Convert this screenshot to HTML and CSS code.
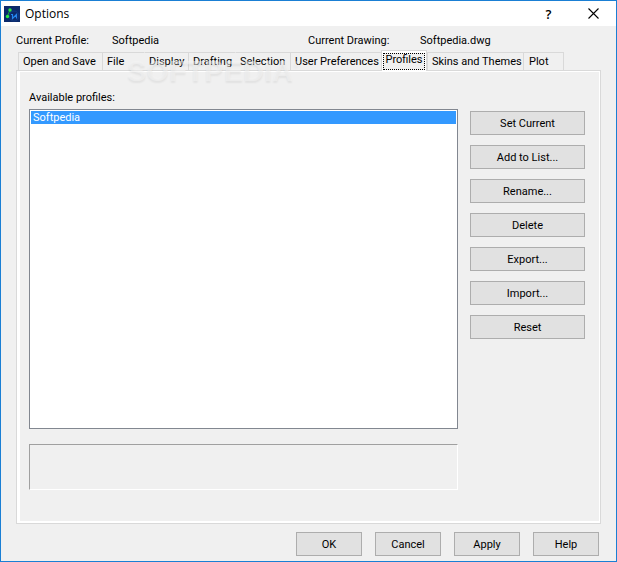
FILE: index.html
```html
<!DOCTYPE html>
<html lang="en">
<head>
<meta charset="utf-8">
<title>Options</title>
<link rel="stylesheet" href="styles.css">
</head>
<body>
<div class="window">
  <header class="titlebar">
    <svg class="app-icon" viewBox="0 0 16 16" aria-hidden="true">
      <rect width="16" height="16" fill="#0b2a6b"/>
      <circle cx="10" cy="10" r="5" fill="none" stroke="#123a82"/>
      <path d="M3.500 10 5.500 5" stroke="#18a33f" stroke-width="1"/>
      <circle cx="6" cy="4" r="1.700" fill="#2bea43"/>
      <circle cx="3.500" cy="10.500" r="1.700" fill="#2bea43"/>
      <path d="M7 8.500h1.500v4l4-4v4" fill="none" stroke="#2586ee" stroke-width="1.200"/>
    </svg>
    <h1 class="title">Options</h1>
    <button class="caption-button" type="button" aria-label="Help">?</button>
    <button class="caption-button close" type="button" aria-label="Close">
      <svg class="close-icon" viewBox="0 0 11 11" aria-hidden="true"><path d="M.5.5l10 10M10.500.5l-10 10" stroke="#000" stroke-width="1.1"/></svg>
    </button>
  </header>

  <main class="content">
    <dl class="summary">
      <dt>Current Profile:</dt><dd>Softpedia</dd>
      <dt>Current Drawing:</dt><dd>Softpedia.dwg</dd>
    </dl>

    <div class="tabs" role="tablist">
      <button class="tab" role="tab" type="button">Open and Save</button>
      <button class="tab" role="tab" type="button">File</button>
      <button class="tab" role="tab" type="button">Display</button>
      <button class="tab" role="tab" type="button">Drafting</button>
      <button class="tab" role="tab" type="button">Selection</button>
      <button class="tab" role="tab" type="button">User Preferences</button>
      <button class="tab selected" role="tab" type="button" aria-selected="true"><span class="focus">Profiles</span></button>
      <button class="tab" role="tab" type="button">Skins and Themes</button>
      <button class="tab" role="tab" type="button">Plot</button>
      <div class="watermark">SOFTPEDIA<span class="reg">®</span></div>
    </div>

    <section class="panel" role="tabpanel">
      <label class="list-label" for="profiles">Available profiles:</label>
      <div class="columns">
        <div class="list-column">
          <select class="profiles" id="profiles" size="10">
            <option selected>Softpedia</option>
          </select>
          <div class="description"></div>
        </div>
        <div class="actions">
          <button class="button" type="button">Set Current</button>
          <button class="button" type="button">Add to List...</button>
          <button class="button" type="button">Rename...</button>
          <button class="button" type="button">Delete</button>
          <button class="button" type="button">Export...</button>
          <button class="button" type="button">Import...</button>
          <button class="button" type="button">Reset</button>
        </div>
      </div>
    </section>

    <footer class="footer">
      <button class="button" type="button">OK</button>
      <button class="button" type="button">Cancel</button>
      <button class="button" type="button">Apply</button>
      <button class="button" type="button">Help</button>
    </footer>
  </main>
</div>
</body>
</html>
```
FILE: styles.css
```css
* {
  box-sizing: border-box;
}

body {
  margin: 0;
  color: #000;
  font: 11px/16px Roboto, "Liberation Sans", sans-serif;
}

button,
select {
  font: inherit;
  color: inherit;
}

.window {
  display: flex;
  flex-direction: column;
  min-height: 100vh;
  border: 1px solid #1a7fd4;
  background: #f0f0f0;
}

.titlebar {
  display: flex;
  align-items: center;
  height: 25px;
  padding-left: 3px;
  background: #fff;
}

.app-icon {
  width: 16px;
  height: 16px;
}

.title {
  flex: 1;
  margin: 0 0 0 5px;
  font: 12px/16px "Open Sans", "Noto Sans", sans-serif;
}

.caption-button {
  display: flex;
  align-items: center;
  justify-content: center;
  width: 45px;
  height: 25px;
  padding: 0;
  border: 0;
  background: none;
  font: 600 13px/16px "Open Sans", sans-serif;
}

.close-icon {
  width: 11px;
  height: 11px;
}

.content {
  display: flex;
  flex: 1;
  flex-direction: column;
  padding: 7px 15px 5px;
}

.summary {
  display: grid;
  grid-template-columns: 96px 196px 112px 1fr;
  margin: 0;
}

.summary dd {
  margin: 0;
}

.tabs {
  position: relative;
  display: grid;
  grid-template-columns: 84px 42px 44px 47px 55px 91px 46px 96px 41px;
  align-items: end;
  height: 20px;
  margin: 1px 0 0 2px;
}

.tab {
  height: 18px;
  padding: 0 0 0 4px;
  border: solid #d9d9d9;
  border-width: 1px 0 0 1px;
  background: none;
  text-align: left;
  white-space: nowrap;
}

/* These tabs have no separator on their left edge. */
.tab:nth-child(3),
.tab:nth-child(5) {
  border-left-color: transparent;
}

.tab:nth-child(9) {
  padding-left: 5px;
  border-right-width: 1px;
}

.tab.selected {
  z-index: 1;
  height: 21px;
  margin-bottom: -1px;
  padding: 1px;
  border-right-width: 1px;
  background: #fff;
}

.focus {
  display: block;
  height: 17px;
  border: 1px dotted #000;
  background: #f0f0f0;
  line-height: 12px;
  text-align: center;
}

.watermark {
  position: absolute;
  z-index: 2;
  top: -1px;
  left: 109px;
  color: rgb(244 244 244 / 55%);
  font: bold 29px/32px "Liberation Sans", sans-serif;
  text-shadow: 0 2px 2px rgb(0 0 0 / 6%);
  pointer-events: none;
}

.reg {
  font-size: 8px;
  vertical-align: 14px;
}

.panel {
  display: flex;
  flex: 1;
  flex-direction: column;
  border: 1px solid #d9d9d9;
  box-shadow: inset 3px 1px #fff, inset -1px -2px #fff;
  padding: 19px 15px 33px 12px;
}

.list-label {
  margin-bottom: 3px;
}

.columns {
  display: flex;
  flex: 1;
  gap: 12px;
}

.list-column {
  display: flex;
  flex: 1;
  flex-direction: column;
  gap: 15px;
}

.profiles {
  flex: 1;
  width: 100%;
  padding: 1px;
  border: 1px solid #828790;
  border-radius: 0;
  outline: 0;
  background: #fff;
}

.profiles option {
  min-height: 13px;
  padding: 0 2px;
  line-height: 13px;
}

.profiles option:checked {
  background: linear-gradient(#39f, #39f);
  color: #fff;
}

.description {
  height: 46px;
  border: 1px solid;
  border-color: #a0a0a0 #fff #fff #a0a0a0;
}

.actions {
  display: grid;
  align-content: start;
  gap: 10px;
  width: 115px;
  padding-top: 2px;
}

.button {
  height: 24px;
  padding: 1px 0 0;
  border: 1px solid #adadad;
  background: #e1e1e1;
}

.footer {
  display: flex;
  justify-content: flex-end;
  gap: 13px;
  margin-top: 8px;
  padding-right: 2px;
}

.footer .button {
  width: 66px;
}
```
